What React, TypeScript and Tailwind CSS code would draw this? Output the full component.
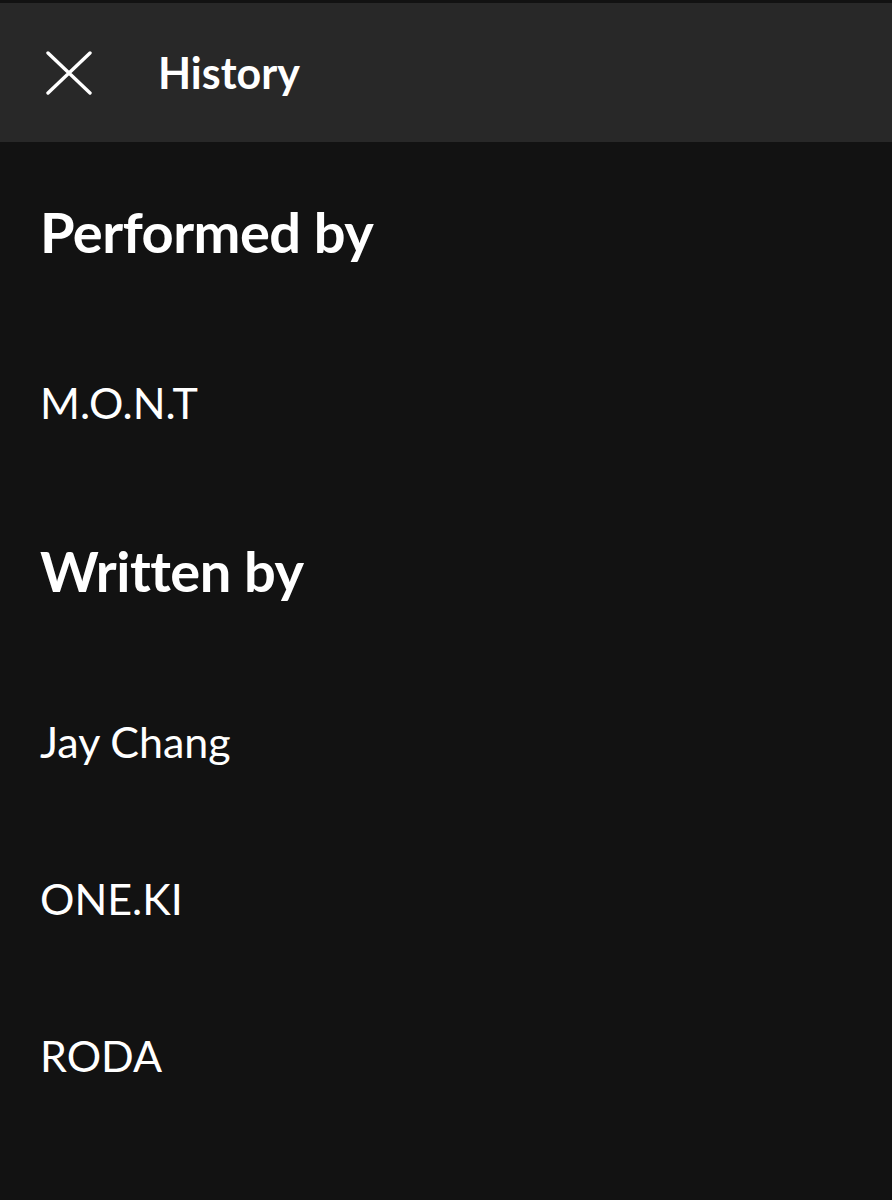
const performers = ["M.O.N.T"];
const writers = ["Jay Chang", "ONE.KI", "RODA"];

function CloseIcon() {
  return (
    <svg width="46" height="44" viewBox="0 0 46 44" fill="none" className="block">
      <path
        d="M2 2 L44 42 M44 2 L2 42"
        stroke="#ffffff"
        strokeWidth="3.4"
        strokeLinecap="round"
      />
    </svg>
  );
}

function CreditSection({ title, names }: { title: string; names: string[] }) {
  return (
    <section>
      <h2 className="text-[56px] font-bold leading-none tracking-[-0.5px] text-white mb-[121px]">
        {title}
      </h2>
      <ul className="flex flex-col gap-[114px]">
        {names.map((name) => (
          <li key={name} className="text-[43px] leading-none text-white">
            {name}
          </li>
        ))}
      </ul>
    </section>
  );
}

export default function App() {
  return (
    <div
      className="min-h-[1200px] w-full bg-[#121212] pt-[3px]"
      style={{ fontFamily: "Lato, 'Noto Sans', sans-serif" }}
    >
      {/* top bar */}
      <header className="h-[139px] bg-[#282828] flex items-center pl-[46px]">
        <CloseIcon />
        <h1 className="ml-[66px] text-[43px] font-bold leading-none text-white">History</h1>
      </header>

      <main className="px-[40px] pt-[62px] flex flex-col gap-[119px]">
        <CreditSection title="Performed by" names={performers} />
        <CreditSection title="Written by" names={writers} />
      </main>
    </div>
  );
}
